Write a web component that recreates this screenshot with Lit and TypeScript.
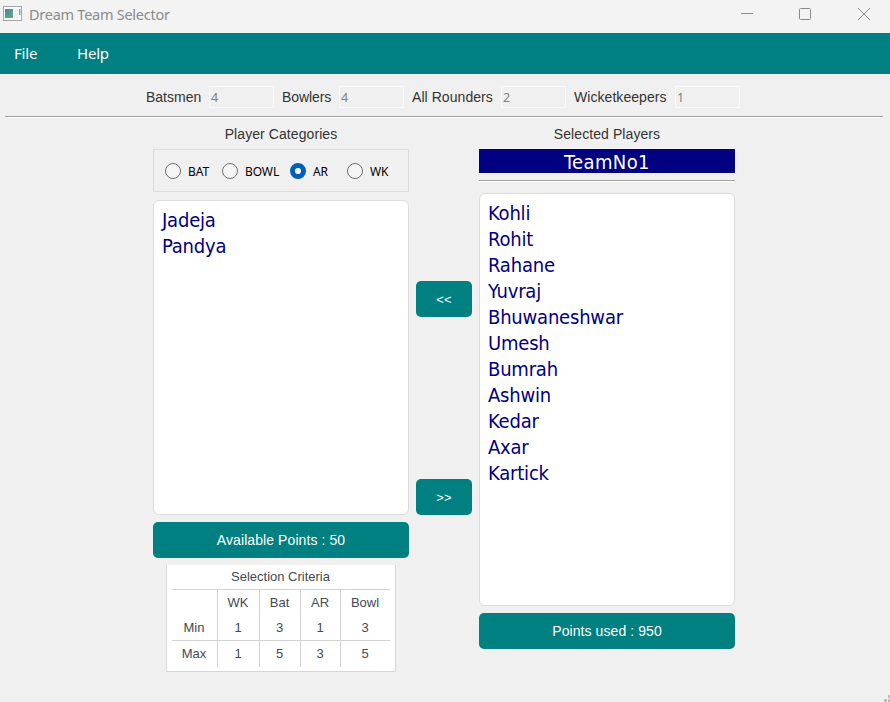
import { LitElement, html, css } from "lit";
import { customElement, property, state } from "lit/decorators.js";
import { classMap } from "lit/directives/class-map.js";

@customElement("title-bar")
class TitleBar extends LitElement {
  static styles = css`
    :host {
      display: flex;
      height: 33px;
      box-sizing: border-box;
      padding: 0 20px 6px 3px;
      align-items: center;
      background: #f3f3f3;
      color: #8b8b8b;
      font: 14.5px/20px "Noto Sans", sans-serif;
    }
    .name { margin: 0 0 0 7px; flex: 1; letter-spacing: -0.26px; white-space: nowrap; }
    .controls { display: flex; gap: 47px; }
    .controls svg { margin-top: 1px; }
    .controls svg:first-child { margin-right: -1px; }
    svg { display: block; }
  `;
  render() {
    return html`
      <svg width="19" height="16" viewBox="0 0 19 16">
        <defs>
          <linearGradient id="g" x1="0" y1="0" x2="1" y2="1">
            <stop offset="0" stop-color="#4a7fae" />
            <stop offset="1" stop-color="#68b078" />
          </linearGradient>
        </defs>
        <rect x="0.5" y="0.5" width="18" height="14" fill="#f8fafb" stroke="#a2a5a9" />
        <rect x="2" y="3" width="8" height="9" fill="url(#g)" />
        <rect x="11" y="3" width="4" height="9" fill="#edf0f2" />
        <rect x="16" y="3" width="1.4" height="6" fill="#69a98d" />
      </svg>
      <span class="name">Dream Team Selector</span>
      <div class="controls">
        <svg width="12" height="12" viewBox="0 0 12 12"><path d="M0 5.5H12" stroke="#8f8f8f" /></svg>
        <svg width="12" height="12" viewBox="0 0 12 12">
          <rect x="0.5" y="0.5" width="11" height="11" rx="1" fill="none" stroke="#8a8a8a" />
        </svg>
        <svg width="12" height="12" viewBox="0 0 12 12">
          <path d="M0 0L12 12M12 0L0 12" stroke="#8a8a8a" />
        </svg>
      </div>
    `;
  }
}

@customElement("player-list")
class PlayerList extends LitElement {
  @property({ attribute: false }) players: string[] = [];
  static styles = css`
    :host {
      display: block;
      box-sizing: border-box;
      padding: 6px 8px;
      background: #fff;
      border: 1px solid #dcdcdc;
      border-radius: 6px;
      color: #000080;
      font: 20px/26px "DejaVu Sans Condensed", "DejaVu Sans", sans-serif;
      font-stretch: condensed;
      letter-spacing: -0.2px;
    }
    .player { height: 26px; }
  `;
  render() {
    return this.players.map((p) => html`<div class="player">${p}</div>`);
  }
}

@customElement("criteria-table")
class CriteriaTable extends LitElement {
  static styles = css`
    :host {
      display: block;
      box-sizing: border-box;
      width: 230px;
      height: 107px;
      padding: 0 5px 4px;
      background: #fff;
      border: 1px solid #d6d6d6;
      border-top: 0;
      color: #434a54;
      font: 13px/24px "Liberation Sans", sans-serif;
    }
    .caption { height: 24px; text-align: center; padding-right: 1px; }
    .grid {
      display: grid;
      grid-template-columns: 46px 42px 41px 40px 49px;
      grid-template-rows: 25px 26px 26px;
      border-top: 1px solid #d2d2d2;
    }
    .cell {
      text-align: center;
      border-right: 1px solid #d2d2d2;
      line-height: 25px;
      box-sizing: border-box;
      padding-right: 1px;
    }
    .cell.end { border-right: 0; }
    .cell.last { border-top: 1px solid #d2d2d2; margin-top: -1px; }
  `;
  private rows = [
    ["", "WK", "Bat", "AR", "Bowl"],
    ["Min", "1", "3", "1", "3"],
    ["Max", "1", "5", "3", "5"],
  ];
  render() {
    return html`
      <div class="caption">Selection Criteria</div>
      <div class="grid">
        ${this.rows.map((row, r) =>
          row.map((c, i) => html`<div class=${classMap({ cell: true, end: i === 4, last: r === 2 })}>${c}</div>`)
        )}
      </div>
    `;
  }
}

@customElement("app-root")
class AppRoot extends LitElement {
  @state() private category = "AR";
  private counts = [
    { label: "Batsmen", value: 4, cls: "c1" },
    { label: "Bowlers", value: 4, cls: "c2" },
    { label: "All Rounders", value: 2, cls: "c3" },
    { label: "Wicketkeepers", value: 1, cls: "c4" },
  ];
  private categories = ["BAT", "BOWL", "AR", "WK"];
  private available = ["Jadeja", "Pandya"];
  private selected = [
    "Kohli", "Rohit", "Rahane", "Yuvraj", "Bhuwaneshwar", "Umesh",
    "Bumrah", "Ashwin", "Kedar", "Axar", "Kartick",
  ];

  static styles = css`
    :host {
      display: flex;
      flex-direction: column;
      height: 702px;
      width: 890px;
      overflow: hidden;
      background: #f0f0f0;
      color: #333;
      font: 14px/20px "Liberation Sans", sans-serif;
    }
    .menu {
      display: flex;
      height: 41px;
      box-sizing: border-box;
      padding-left: 14px;
      background: #008080;
      color: #fff;
      font: 15px/41px "Noto Sans", sans-serif;
      letter-spacing: -0.2px;
    }
    .menu span { width: 63px; }
    .counts {
      display: flex;
      align-items: center;
      gap: 8px;
      height: 42px;
      padding: 4px 0 0 146px;
      box-sizing: border-box;
      line-height: 44px;
      white-space: nowrap;
    }
    .c1 { width: 55px; }
    .c2 { width: 49px; letter-spacing: -0.1px; }
    .c3 { width: 81px; letter-spacing: 0.06px; }
    .c4 { width: 93px; letter-spacing: 0.06px; }
    .box {
      width: 65px;
      height: 22px;
      box-sizing: border-box;
      padding-left: 1px;
      border: 1px solid #fafafa;
      color: #808080;
      font: 12.5px/21px "Noto Sans", sans-serif;
    }
    .rule { height: 1px; background: #a0a0a0; border-bottom: 1px solid #fff; }
    .rule.wide { margin: 0 7px 0 5px; }
    .main { display: flex; gap: 7px; padding: 6px 0 0 153px; flex: 1; }
    .col { width: 256px; display: flex; flex-direction: column; }
    .head { height: 25px; text-align: center; letter-spacing: 0.08px; }
    .radios {
      display: flex;
      height: 43px;
      box-sizing: border-box;
      border: 1px solid #dcdcdc;
      padding: 0 0 0 11px;
      align-items: center;
      margin-bottom: 8px;
      color: #000;
      font: 12px/20px "Noto Sans", sans-serif;
    }
    .radio { display: flex; align-items: center; gap: 7px; cursor: default; }
    .text { padding-top: 2px; letter-spacing: -0.1px; }
    .r-BAT { width: 57px; }
    .r-BOWL { width: 68px; }
    .r-AR { width: 57px; }
    .dot {
      width: 16px;
      height: 16px;
      box-sizing: border-box;
      border: 1px solid #707070;
      border-radius: 50%;
      background: #f5f5f5;
    }
    .dot.on { border: 5px solid #005fb8; background: #fff; }
    .avail { height: 315px; margin-bottom: 7px; }
    .chosen { height: 413px; margin: 11px 0 7px; }
    .btn {
      height: 36px;
      border-radius: 5px;
      background: #008080;
      color: #fff;
      text-align: center;
      line-height: 36px;
      letter-spacing: 0.08px;
    }
    .moves { width: 56px; display: flex; flex-direction: column; gap: 162px; padding-top: 157px; }
    .moves .btn { font-size: 13px; line-height: 37px; }
    criteria-table { margin: 7px 0 0 13px; }
    .team {
      height: 24px;
      margin-bottom: 7px;
      background: #000080;
      color: #fff;
      text-align: center;
      font: 20px/26px "DejaVu Sans Condensed", "DejaVu Sans", sans-serif;
      font-stretch: condensed;
      letter-spacing: 0.4px;
    }
    .grip { position: absolute; left: 882px; top: 694px; }
  `;

  render() {
    return html`
      <title-bar></title-bar>
      <div class="menu"><span>File</span><span>Help</span></div>
      <div class="counts">
        ${this.counts.map((c) => html`<span class=${c.cls}>${c.label}</span><div class="box">${c.value}</div>`)}
      </div>
      <div class="rule wide"></div>
      <div class="main">
        <div class="col">
          <div class="head">Player Categories</div>
          <div class="radios">
            ${this.categories.map(
              (c) => html`<div class="radio r-${c}" @click=${() => (this.category = c)}>
                <span class=${classMap({ dot: true, on: c === this.category })}></span><span class="text">${c}</span>
              </div>`
            )}
          </div>
          <player-list class="avail" .players=${this.available}></player-list>
          <div class="btn">Available Points : 50</div>
          <criteria-table></criteria-table>
        </div>
        <div class="moves">
          <div class="btn">&lt;&lt;</div>
          <div class="btn">&gt;&gt;</div>
        </div>
        <div class="col">
          <div class="head">Selected Players</div>
          <div class="team">TeamNo1</div>
          <div class="rule"></div>
          <player-list class="chosen" .players=${this.selected}></player-list>
          <div class="btn">Points used : 950</div>
        </div>
      </div>
      <svg class="grip" width="8" height="8" viewBox="0 0 8 8">
        <path d="M6 1h2v3h-2zM2 5h3v3h-3zM6 5h2v3h-2z" fill="#bfbfbf" />
      </svg>
    `;
  }
}
